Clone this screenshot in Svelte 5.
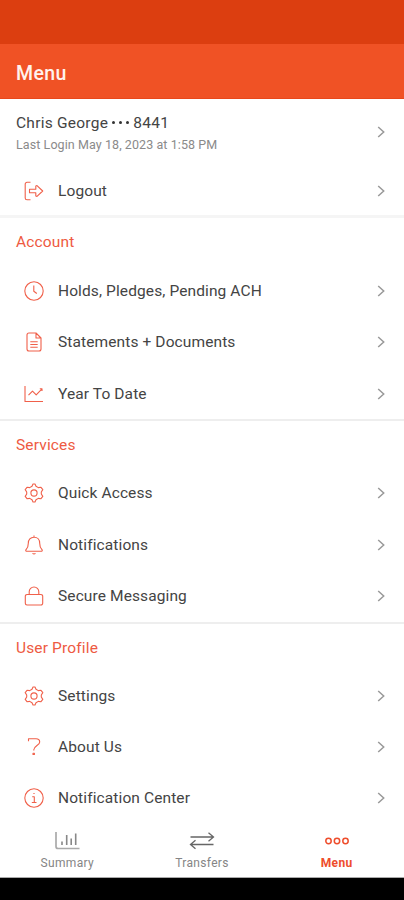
<script lang="ts">
	type Item = { label: string; icon: string };
	type Section = { title: string; items: Item[] };

	const sections: Section[] = [
		{
			title: 'Account',
			items: [
				{ label: 'Holds, Pledges, Pending ACH', icon: 'clock' },
				{ label: 'Statements + Documents', icon: 'document' },
				{ label: 'Year To Date', icon: 'chart' }
			]
		},
		{
			title: 'Services',
			items: [
				{ label: 'Quick Access', icon: 'gear' },
				{ label: 'Notifications', icon: 'bell' },
				{ label: 'Secure Messaging', icon: 'lock' }
			]
		},
		{
			title: 'User Profile',
			items: [
				{ label: 'Settings', icon: 'gear' },
				{ label: 'About Us', icon: 'question' },
				{ label: 'Notification Center', icon: 'info' }
			]
		}
	];

	const tabs: Item[] = [
		{ label: 'Summary', icon: 'summary' },
		{ label: 'Transfers', icon: 'transfers' },
		{ label: 'Menu', icon: 'menu' }
	];

	let active = $state('Menu');

	// 20x20 line icons
	const icons: Record<string, string> = {
		logout: 'M6.500 1.300H3a1.800 1.800 0 0 0-1.800 1.800v13.800A1.800 1.800 0 0 0 3 18.700h3.500M5.500 8.300h6.300V5l1.200-.4 5.700 5.400-5.700 5.400-1.200-.4v-3.300H5.500z',
		clock: 'M10 .8a9.200 9.200 0 1 0 0 18.400A9.200 9.200 0 1 0 10 .8zM9.800 4.500v5.700l3 2.300',
		document: 'M12 1H5a2 2 0 0 0-2 2v14a2 2 0 0 0 2 2h10a2 2 0 0 0 2-2V6zM12 1v5h5M6.300 9.700h7.400M6.300 12.500h7.400M6.300 15.300h7.400',
		chart: 'M1 2v15.500h18M4.500 11.200l4-4 3.700 3.700 5.800-6M15.800 4.800H18v2.200',
		gear: 'M8 3.200L9 1h2l1 2.200 2.300 1.400 2.700-.3 1.800 2.300L17.300 9v2l1.500 2.400-1.800 2.300-2.700-.3L12 16.800 11 19H9l-1-2.200-2.300-1.400-2.700.3-1.800-2.300L2.700 11V9L1.200 6.600 3 4.300l2.700.3zM10 6.900a3.100 3.100 0 1 0 0 6.200 3.100 3.100 0 1 0 0-6.200z',
		bell: 'M10 .5v1.700M10 2.200c-3.600 0-5.700 2.700-5.700 6 0 4.200-1.200 5.200-2.300 6.400-.6.700-.1 1.700.8 1.700h14.400c.9 0 1.400-1 .8-1.700-1.100-1.200-2.300-2.200-2.300-6.400 0-3.300-2.100-6-5.700-6zM8.500 18.300q1.500 1.300 3 0',
		lock: 'M3 8.500h14a1.700 1.700 0 0 1 1.700 1.700v7.100a1.700 1.700 0 0 1-1.700 1.700H3a1.700 1.700 0 0 1-1.700-1.700v-7.100A1.700 1.700 0 0 1 3 8.500zM5.200 8.500V5.800a4.800 4.800 0 0 1 9.600 0v2.700',
		question: 'M4.500 4.300V1.800H12c2.200 0 3.700 1.300 3.700 3.200 0 3.300-5.900 3.800-5.900 7.800v.7M9 16.300h1.400v1.200H9z',
		info: 'M10 .8a9.200 9.200 0 1 0 0 18.400A9.200 9.200 0 1 0 10 .8zM9.400 5.500h1.200M8.200 8.800h2.100v5.500M7.800 14.500h4.700'
	};
</script>

{#snippet chevron()}
	<svg class="chevron" viewBox="0 0 8 12" width="8" height="12">
		<path d="M1.200 1l5.500 5-5.500 5" />
	</svg>
{/snippet}

{#snippet row(item: Item)}
	<button class="row">
		<svg class="icon" viewBox="0 0 20 20" width="20" height="20"><path d={icons[item.icon]} /></svg>
		<span class="label">{item.label}</span>
		{@render chevron()}
	</button>
{/snippet}

<div class="app">
	<div class="status"></div>
	<header>Menu</header>

	<main>
		<button class="member">
			<span class="who">
				<span class="name">Chris George <i></i><i></i><i></i> 8441</span>
				<small>Last Login May 18, 2023 at 1:58 PM</small>
			</span>
			{@render chevron()}
		</button>
		{@render row({ label: 'Logout', icon: 'logout' })}

		{#each sections as section}
			<section>
				<h2>{section.title}</h2>
				{#each section.items as item}
					{@render row(item)}
				{/each}
			</section>
		{/each}
	</main>

	<nav>
		{#each tabs as tab}
			<button class="tab" class:active={active == tab.label} onclick={() => (active = tab.label)}>
				{#if tab.icon == 'summary'}
					<svg viewBox="0 0 26 20" width="26" height="20">
						<path class="axis" d="M2 1v14.500a2 2 0 0 0 2 2h21.500" />
						<path class="bars" d="M8 14v-3.500M12.700 14V4M17.200 14V7.500M21.700 14V2.500" />
					</svg>
				{:else if tab.icon == 'transfers'}
					<svg viewBox="0 0 26 20" width="26" height="20">
						<path d="M1.500 6h23M19.500 1.800l5 4.200-5 4.200M24.500 13.500h-23M6.500 9.300l-5 4.200 5 4.200" />
					</svg>
				{:else}
					<svg viewBox="0 0 26 20" width="26" height="20">
						<circle cx="4.500" cy="10" r="2.700" />
						<circle cx="13" cy="10" r="2.700" />
						<circle cx="21.500" cy="10" r="2.700" />
					</svg>
				{/if}
				<span>{tab.label}</span>
			</button>
		{/each}
	</nav>
	<div class="gesture"></div>
</div>

<style>
	:global(body) {
		margin: 0;
		background: #000;
	}
	.app {
		display: flex;
		flex-direction: column;
		height: 900px;
		overflow: hidden;
		background: #fff;
		color: #444;
		font-family: Roboto, sans-serif;
	}
	button {
		border: 0;
		padding: 0;
		background: none;
		color: inherit;
		font: inherit;
		text-align: left;
		cursor: pointer;
	}
	svg {
		display: block;
		flex: none;
		fill: none;
		stroke: currentColor;
	}
	.status {
		flex: none;
		height: 44px;
		background: #dc3e10;
	}
	header {
		flex: none;
		box-sizing: border-box;
		height: 55px;
		padding-left: 16px;
		background: #f05225;
		border-bottom: 1px solid #e8481b;
		color: #fff3ee;
		font-size: 19.500px;
		font-weight: 500;
		line-height: 59px;
		letter-spacing: .4px;
	}
	main {
		flex: 1;
		min-height: 0;
		overflow: hidden;
	}
	.member, .row {
		display: flex;
		align-items: center;
		box-sizing: border-box;
		width: 100%;
		padding-right: 19.500px;
	}
	.member {
		height: 66.500px;
		padding-left: 16px;
	}
	.who {
		flex: 1;
		display: flex;
		flex-direction: column;
		font-size: 15.500px;
		line-height: 21px;
		letter-spacing: .25px;
		padding-top: 4px;
	}
	.name i {
		display: inline-block;
		width: 3px;
		height: 3px;
		margin-right: 4px;
		border-radius: 50%;
		background: #333;
		vertical-align: 4px;
	}
	.name i:last-of-type {
		margin-right: 0;
	}
	small {
		color: #8a8a8a;
		font-size: 12.500px;
		letter-spacing: .08px;
	}
	.row {
		height: 51.400px;
		padding-left: 24px;
	}
	.icon {
		color: #f0604a;
		stroke-width: 1.100;
		stroke-linejoin: round;
	}
	.label {
		flex: 1;
		margin-left: 14px;
		font-size: 15.500px;
		letter-spacing: .11px;
		white-space: nowrap;
	}
	.chevron {
		color: #999;
		stroke-width: 1.500;
	}
	section {
		border-top: 2px solid #eee;
	}
	h2 {
		margin: 0;
		height: 46.300px;
		padding-left: 16px;
		color: #ee5a42;
		font-size: 15.500px;
		font-weight: 400;
		line-height: 49px;
		letter-spacing: .15px;
	}
	/* the first divider is softer and sits tighter under the logout row */
	section:first-of-type {
		margin-top: -2px;
		border-top: 3px solid #f5f5f5;
	}
	section:first-of-type h2 {
		height: 47.200px;
	}
	nav {
		flex: none;
		display: grid;
		grid-template-columns: repeat(3, 1fr);
		height: 53px;
		background: #fff;
		border-bottom: 1px solid #aaa;
	}
	.tab {
		display: flex;
		flex-direction: column;
		align-items: center;
		padding-top: 7px;
		color: #858585;
		font-size: 12px;
		line-height: 14px;
		letter-spacing: .35px;
	}
	.tab span {
		margin-top: 5px;
	}
	.tab svg {
		stroke: #666;
		stroke-width: 1.300;
	}
	.tab .axis {
		stroke: #aaa;
		stroke-width: 1.700;
	}
	.tab .bars {
		stroke: #888;
		stroke-width: 1.600;
	}
	.tab.active {
		color: #ee4d2c;
		font-weight: 700;
	}
	.tab.active svg {
		stroke: #ee4d2c;
		stroke-width: 1.500;
	}
	.gesture {
		flex: none;
		height: 22px;
		background: #000;
	}
</style>
